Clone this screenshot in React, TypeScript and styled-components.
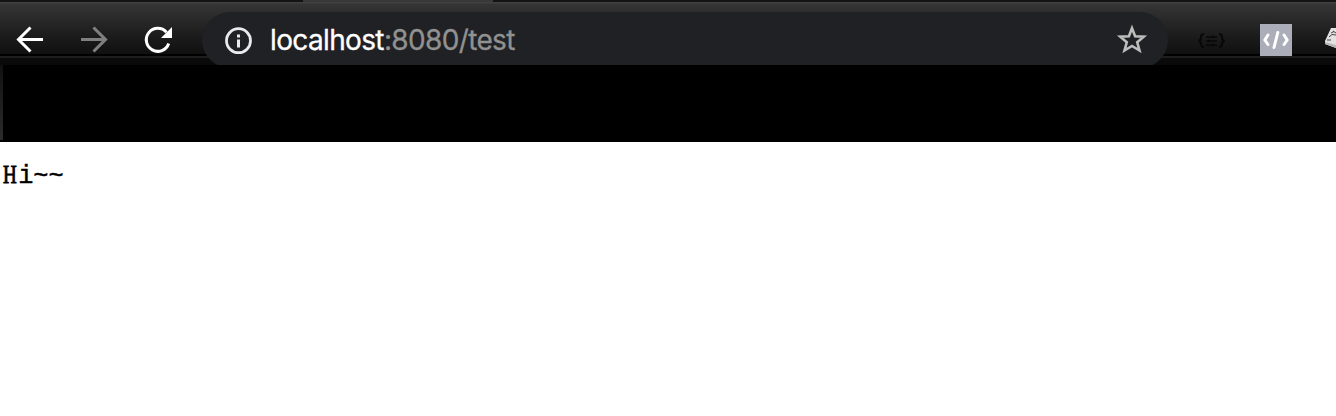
import React from 'react';
import styled, { createGlobalStyle } from 'styled-components';

const GlobalStyle = createGlobalStyle`
  html, body { margin: 0; background: #fff; }
  * { box-sizing: border-box; }
  body { overflow: hidden; }
`;

const Browser = styled.div`
  width: 1336px;
  height: 416px;
  overflow: hidden;
  background: #fff;
`;

const TabStrip = styled.div`
  display: flex;
  height: 2px;
  background: #141414;
`;

const ActiveTab = styled.div`
  width: 190px;
  height: 2px;
  margin-left: 303px;
  background: #383838;
`;

const Toolbar = styled.header`
  display: flex;
  height: 63px;
  overflow: hidden;
  background: linear-gradient(
    #404040 0, #404040 1px, #353535 2px, #1b1b1b 35px, #101010 52px,
    #000 52px, #000 54px, #1e1e1e 54px, #1e1e1e 56px, #0b0b0b 56px, #090909 63px
  );
`;

const Navigation = styled.nav`
  display: flex;
  gap: 32px;
  width: 202px;
  padding: 22px 0 0 14px;
`;

const IconButton = styled.button<{ $muted?: boolean }>`
  width: 32px;
  height: 32px;
  padding: 0;
  border: 0;
  background: none;
  color: ${({ $muted }) => ($muted ? '#808080' : '#fff')};
  svg { display: block; overflow: visible; }
`;

const AddressBar = styled.div`
  display: flex;
  align-items: center;
  width: 966px;
  height: 56px;
  margin-top: 10px;
  padding: 0 20px 0 21px;
  flex-shrink: 0;
  border-radius: 28px;
  background: #202124;
  svg { display: block; }
`;

const Url = styled.div`
  flex: 1;
  margin-left: 16px;
  color: #919191;
  font: 400 28px/32px Inter, sans-serif;
  letter-spacing: -0.64px;
  -webkit-text-stroke: 0.3px;
  white-space: pre;
`;

const Host = styled.span`
  color: #fff;
`;

const Extensions = styled.div`
  display: flex;
  width: 168px;
  padding: 22px 0 0 29px;
  flex-shrink: 0;
  svg { display: block; flex-shrink: 0; }
`;

const CodeTile = styled.div`
  width: 32px;
  height: 32px;
  margin: 0 32px 0 33px;
  flex-shrink: 0;
  background: #abaeb9;
`;

const BlankBar = styled.div`
  height: 77px;
  padding-bottom: 2px;
  background: #000;
`;

const WindowEdge = styled.div`
  width: 3px;
  height: 75px;
  background: linear-gradient(#111, #2c2c2c);
`;

const Page = styled.main`
  padding: 18px 3px;
  color: #000;
`;

const Message = styled.pre`
  margin: 0;
  font: 25.3px/29px "Liberation Mono", monospace;
  -webkit-text-stroke: 0.4px;
`;

const SlabCapital = styled.span`
  display: inline-block;
  width: 15.2px;
  font: 25px/29px "Liberation Serif", serif;
  -webkit-text-stroke: 0.9px;
  transform: scaleX(0.76);
  transform-origin: left;
`;

export default function App() {
  return (
    <>
      <GlobalStyle />
      <Browser>
        <TabStrip><ActiveTab /></TabStrip>
        <Toolbar>
          <Navigation>
            <IconButton aria-label="Back">
              <svg width="32" height="32" viewBox="0 0 32 32" fill="none" stroke="currentColor" strokeWidth="3">
                <path d="M29 15.5H5M16.5 3.5L4.5 15.5L16.5 27.5" />
              </svg>
            </IconButton>
            <IconButton $muted aria-label="Forward">
              <svg width="32" height="32" viewBox="0 0 32 32" fill="none" stroke="currentColor" strokeWidth="3">
                <path d="M3 15.5H27M15.5 3.5L27.5 15.5L15.5 27.5" />
              </svg>
            </IconButton>
            <IconButton aria-label="Reload">
              <svg width="32" height="32" viewBox="0 0 32 32">
                <path d="M26.7 19.5A11.5 11.5 0 1 1 24.5 8.3" fill="none" stroke="currentColor" strokeWidth="3" />
                <path d="M30 3V14H19Z" fill="currentColor" />
              </svg>
            </IconButton>
          </Navigation>
          <AddressBar>
            <svg width="31" height="31" viewBox="0 0 31 31">
              <circle cx="15.5" cy="15.7" r="12" fill="none" stroke="#e8eaed" strokeWidth="2.8" />
              <path d="M14 9.5h3v3h-3zM14 14.5h3v8h-3z" fill="#e8eaed" />
            </svg>
            <Url><Host>localhost</Host>:8080/test</Url>
            <svg width="32" height="32" viewBox="0 0 32 32">
              <path d="M16 4.2L19.1 12.2L27.8 12.7L21.2 18.3L23.5 26.5L16 22L8.5 26.5L10.8 18.3L4.2 12.7L12.9 12.2Z" fill="none" stroke="#bdbdbd" strokeWidth="2.6" />
            </svg>
          </AddressBar>
          <Extensions>
            <svg width="30" height="32" viewBox="0 0 30 32" fill="none" stroke="#080808" strokeWidth="2">
              <path d="M7 10Q4 10 4 13Q4 16.5 1.5 17Q4 17.5 4 20Q4 23 7 23M22 10Q25 10 25 13Q25 16.5 27.5 17Q25 17.5 25 20Q25 23 22 23" />
              <path d="M9 13H20M9 17H20M9 21H20" strokeWidth="1.4" />
              <path d="M16 11.8v2.4M12 15.8v2.4M16 19.8v2.4" />
            </svg>
            <CodeTile>
              <svg width="32" height="32" viewBox="0 0 32 32" fill="none" stroke="#fff" strokeWidth="3" strokeLinecap="round" strokeLinejoin="round">
                <path d="M8 11L4.8 16L8 20.5M24 11L27.2 16L24 20.5M17.8 8.5L14 23.5" />
              </svg>
            </CodeTile>
            <svg width="12" height="32" viewBox="0 0 12 32">
              <path d="M7 4H12V24L1 20V17Z" fill="#e2e2e2" />
              <path d="M1 18L12 21V24L1 20Z" fill="#b8b8b8" />
              <path d="M7 9L10 7.5M5 13L8 10.5L12 11M9 7L12 9M3 16L7 16" fill="none" stroke="#444" strokeWidth="1" />
            </svg>
          </Extensions>
        </Toolbar>
        <BlankBar><WindowEdge /></BlankBar>
        <Page><Message><SlabCapital>H</SlabCapital>i~~</Message></Page>
      </Browser>
    </>
  );
}
